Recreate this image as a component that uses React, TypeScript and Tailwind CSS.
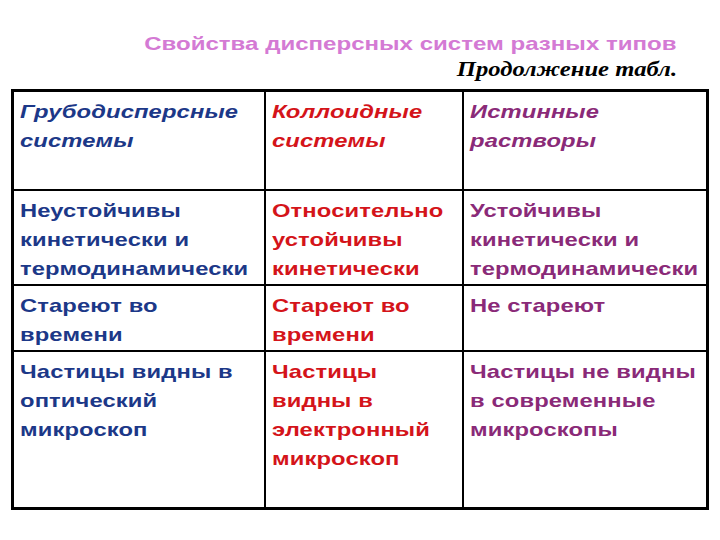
const blue = "text-[#1c3888]";
const red = "text-[#d4141a]";
const purple = "text-[#8a2a78]";

const rows: { h: string; cells: string[][] }[] = [
  {
    h: "h-[95px]",
    cells: [
      ["Неустойчивы", "кинетически и", "термодинамически"],
      ["Относительно", "устойчивы", "кинетически"],
      ["Устойчивы", "кинетически и", "термодинамически"],
    ],
  },
  {
    h: "h-[66px]",
    cells: [["Стареют во", "времени"], ["Стареют во", "времени"], ["Не стареют"]],
  },
  {
    h: "flex-1",
    cells: [
      ["Частицы видны в", "оптический", "микроскоп"],
      ["Частицы", "видны в", "электронный", "микроскоп"],
      ["Частицы не видны", "в современные", "микроскопы"],
    ],
  },
];

const colColors = [blue, red, purple];
const colWidths = ["w-[250px]", "w-[198px]", "flex-1"];

// the source slide is stretched wide, so glyphs get a horizontal scale
function Cell({ lines, i, italic }: { lines: string[]; i: number; italic?: boolean }) {
  return (
    <div
      className={`${colWidths[i]} ${i > 0 ? "border-l-2 border-black" : ""} pl-[6px] pt-[5px] ${colColors[i]} font-bold text-[19px] leading-[29px] ${italic ? "italic" : ""}`}
    >
      {lines.map((l, k) => (
        <div key={k} className="whitespace-nowrap origin-left scale-x-[1.25] tracking-[0.1px]">
          {l}
        </div>
      ))}
    </div>
  );
}

export default function App() {
  return (
    <div className="w-[720px] h-[540px] bg-white font-['Liberation_Sans',Arial,sans-serif] flex flex-col overflow-hidden">
      <div className="h-[89px] flex flex-col items-end pr-[43px] pt-[31px]">
        <div className="origin-right scale-x-[1.3] text-[18.5px] leading-[26px] font-bold text-[#d47ad4]">
          Свойства дисперсных систем разных типов
        </div>
        <div className="origin-right scale-x-[1.23] text-[20px] leading-[24px] font-bold italic font-['Liberation_Serif',serif] text-black">
          Продолжение табл.
        </div>
      </div>
      <div className="mx-[11px] w-[698px] h-[421px] border-[3px] border-black flex flex-col">
        <div className="h-[99px] flex border-b-2 border-black">
          <Cell lines={["Грубодисперсные", "системы"]} i={0} italic />
          <Cell lines={["Коллоидные", "системы"]} i={1} italic />
          <Cell lines={["Истинные", "растворы"]} i={2} italic />
        </div>
        {rows.map((r, ri) => (
          <div
            key={ri}
            className={`${r.h} flex ${ri < rows.length - 1 ? "border-b-2 border-black" : ""}`}
          >
            {r.cells.map((c, ci) => (
              <Cell key={ci} lines={c} i={ci} />
            ))}
          </div>
        ))}
      </div>
    </div>
  );
}
